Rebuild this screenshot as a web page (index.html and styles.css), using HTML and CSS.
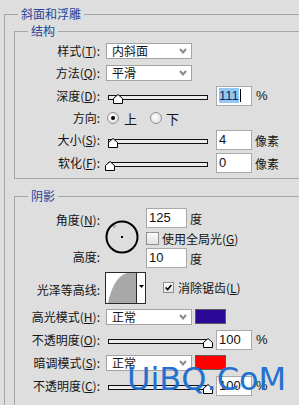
FILE: index.html
```html
<!DOCTYPE html>
<html lang="zh-CN">
<head>
    <meta charset="UTF-8">
    <title>斜面和浮雕</title>
    <link rel="stylesheet" href="styles.css">
</head>
<body>
    <fieldset class="group outer">
        <legend>斜面和浮雕</legend>

        <!-- 结构 -->
        <fieldset class="group sub">
            <legend>结构</legend>
            <div class="row">
                <label class="lbl">样式(<u>T</u>):</label>
                <div class="select"><span>内斜面</span><svg class="chev" width="8" height="6" viewBox="0 0 8 6"><path d="M1 1l3 3.5L7 1" fill="none" stroke="#8c8c8c" stroke-width="2"/></svg></div>
            </div>
            <div class="row">
                <label class="lbl">方法(<u>Q</u>):</label>
                <div class="select"><span>平滑</span><svg class="chev" width="8" height="6" viewBox="0 0 8 6"><path d="M1 1l3 3.5L7 1" fill="none" stroke="#8c8c8c" stroke-width="2"/></svg></div>
            </div>
            <div class="row r-mid">
                <label class="lbl">深度(<u>D</u>):</label>
                <div class="slider"><div class="track"></div><svg class="thumb" style="left:7px" width="10" height="10" viewBox="0 0 10 10"><path d="M.5 9.5V4.5L5 .5l4.5 4v5z" fill="#fff" stroke="#000"/></svg></div>
                <div class="input"><span class="sel">111</span><span class="caret"></span></div>
                <span class="unit num">%</span>
            </div>
            <div class="row">
                <label class="lbl">方向:</label>
                <span class="radio on"></span><span class="opt">上</span>
                <span class="radio second"></span><span class="opt opt-b">下</span>
            </div>
            <div class="row">
                <label class="lbl">大小(<u>S</u>):</label>
                <div class="slider"><div class="track"></div><svg class="thumb" style="left:2px" width="10" height="10" viewBox="0 0 10 10"><path d="M.5 9.5V4.5L5 .5l4.5 4v5z" fill="#fff" stroke="#000"/></svg></div>
                <div class="input">4</div>
                <span class="unit">像素</span>
            </div>
            <div class="row r-tall">
                <label class="lbl">软化(<u>F</u>):</label>
                <div class="slider"><div class="track"></div><svg class="thumb" style="left:-1px" width="10" height="10" viewBox="0 0 10 10"><path d="M.5 9.5V4.5L5 .5l4.5 4v5z" fill="#fff" stroke="#000"/></svg></div>
                <div class="input">0</div>
                <span class="unit">像素</span>
            </div>
        </fieldset>

        <!-- 阴影 -->
        <fieldset class="group sub shade">
            <legend>阴影</legend>
            <div class="angle">
                <div class="angle-labels">
                    <label class="lbl">角度(<u>N</u>):</label>
                    <label class="lbl">高度:</label>
                </div>
                <svg class="dial" width="34" height="34" viewBox="0 0 34 34">
                    <circle cx="17" cy="17" r="15.5" fill="none" stroke="#000" stroke-width="2"/>
                    <rect x="16" y="16" width="2" height="2" fill="#000"/>
                    <path d="M8 6h1M10 6h1M9 5v1M9 7v1" stroke="#666" stroke-width="1"/>
                </svg>
                <div class="angle-fields">
                    <div class="field"><div class="input wide">125</div><span class="unit">度</span></div>
                    <div class="field check-row"><span class="check"></span><span>使用全局光(<u>G</u>)</span></div>
                    <div class="field"><div class="input wide">10</div><span class="unit">度</span></div>
                </div>
            </div>
            <div class="row contour-row">
                <label class="lbl">光泽等高线:</label>
                <svg class="contour" width="41" height="32" viewBox="0 0 41 32">
                    <rect x="0.5" y="0.5" width="40" height="31" fill="#fff" stroke="#2a2a2a"/>
                    <path d="M3 31C6 16 12 4 22 1H31.5V31z" fill="#a8a8a8"/>
                    <path d="M31.5 1V31" stroke="#2a2a2a"/>
                    <path d="M34 13h5l-2.5 3z" fill="#000"/>
                </svg>
                <span class="check on"><svg width="11" height="11" viewBox="0 0 11 11"><path d="M2 5.5l2.5 2.5L9 2.5" fill="none" stroke="#000" stroke-width="2"/></svg></span>
                <span class="check-text">消除锯齿(<u>L</u>)</span>
            </div>
            <div class="row r-shade">
                <label class="lbl">高光模式(<u>H</u>):</label>
                <div class="select"><span>正常</span><svg class="chev" width="8" height="6" viewBox="0 0 8 6"><path d="M1 1l3 3.5L7 1" fill="none" stroke="#8c8c8c" stroke-width="2"/></svg></div>
                <span class="swatch highlight"></span>
            </div>
            <div class="row r-shade">
                <label class="lbl">不透明度(<u>O</u>):</label>
                <div class="slider"><div class="track"></div><svg class="thumb" style="left:97px" width="10" height="10" viewBox="0 0 10 10"><path d="M.5 9.5V4.5L5 .5l4.5 4v5z" fill="#fff" stroke="#000"/></svg></div>
                <div class="input">100</div>
                <span class="unit num">%</span>
            </div>
            <div class="row r-shade">
                <label class="lbl">暗调模式(<u>S</u>):</label>
                <div class="select"><span>正常</span><svg class="chev" width="8" height="6" viewBox="0 0 8 6"><path d="M1 1l3 3.5L7 1" fill="none" stroke="#8c8c8c" stroke-width="2"/></svg></div>
                <span class="swatch shadow"></span>
            </div>
            <div class="row r-shade">
                <label class="lbl">不透明度(<u>C</u>):</label>
                <div class="slider"><div class="track"></div><svg class="thumb" style="left:97px" width="10" height="10" viewBox="0 0 10 10"><path d="M.5 9.5V4.5L5 .5l4.5 4v5z" fill="#fff" stroke="#000"/></svg></div>
                <div class="input">100</div>
                <span class="unit num">%</span>
            </div>
        </fieldset>
    </fieldset>

    <div class="watermark">UiBQ.CoM</div>
</body>
</html>
```

FILE: styles.css
```css
html, body {
    margin: 0;
    overflow: hidden;
}
body {
    position: relative;
    width: 299px;
    height: 405px;
    background: #dedede;
    font-family: "Noto Sans CJK SC", "Noto Sans", sans-serif;
    font-size: 12px;
    color: #141414;
}
u {
    text-decoration: underline;
}

/* group frames, open on the right like the cropped dialog */
.group {
    margin: 0;
    padding: 0;
    border: 1px solid #a6a6a6;
    border-right: 0;
    min-inline-size: 0;
}
.group > legend {
    margin-left: 13px;
    padding: 0 3px;
    line-height: 16px;
    font-size: 12px;
    color: #23469b;
}
.outer {
    margin: 6px 0 0 4px;
}
.sub {
    margin: 1px 0 0 9px;
    padding: 1px 0 3px;
}
.shade {
    margin-top: 9px;
    padding-bottom: 10px;
}

/* rows */
.row {
    display: flex;
    align-items: center;
    height: 22px;
}
.r-mid {
    height: 23px;
}
.r-tall {
    height: 24px;
}
.r-shade {
    height: 23px;
}
.lbl {
    flex: none;
    width: 85px;
    text-align: right;
    line-height: 16px;
}

/* controls */
.select {
    flex: none;
    display: flex;
    align-items: center;
    justify-content: space-between;
    box-sizing: border-box;
    width: 86px;
    height: 16px;
    margin-left: 6px;
    padding: 0 4px 0 5px;
    border: 1px solid #a3a3a3;
    background: #fff;
    line-height: 14px;
}
.slider {
    position: relative;
    flex: none;
    width: 104px;
    height: 14px;
    margin-left: 6px;
}
.track {
    box-sizing: border-box;
    width: 100px;
    height: 5px;
    margin: 6px 0 0 2px;
    border: 1px solid #111;
    background: #ececec;
}
.thumb {
    position: absolute;
    top: 5px;
}
.input {
    flex: none;
    box-sizing: border-box;
    width: 36px;
    height: 20px;
    margin-left: 6px;
    padding-left: 2px;
    border: 1px solid #a9a9a9;
    background: #fff;
    font-family: "Liberation Sans", Arial, sans-serif;
    font-size: 13px;
    line-height: 18px;
    color: #111;
}
.input.wide {
    width: 41px;
    margin-left: 0;
}
.sel {
    background: #93c8f6;
    color: #0b2a66;
}
.caret {
    display: inline-block;
    width: 1px;
    height: 13px;
    margin-left: 1px;
    vertical-align: -2px;
    background: #000;
}
.unit {
    margin-left: 3px;
}
.unit.num {
    margin-left: 4px;
    font-family: "Liberation Sans", Arial, sans-serif;
    font-size: 13px;
}

.radio {
    position: relative;
    flex: none;
    box-sizing: border-box;
    width: 12px;
    height: 12px;
    margin-left: 7px;
    border: 1px solid #909090;
    border-radius: 50%;
    background: radial-gradient(circle at 40% 40%, #fff, #d8d8d8);
}
.radio.on::after {
    content: "";
    position: absolute;
    left: 3px;
    top: 3px;
    width: 4px;
    height: 4px;
    border-radius: 50%;
    background: #000;
}
.radio.second {
    margin-left: 13px;
}
.opt {
    margin-left: 5px;
    font-size: 13px;
}
.opt-b {
    margin-left: 4px;
}

.check {
    flex: none;
    display: flex;
    align-items: center;
    justify-content: center;
    box-sizing: border-box;
    width: 13px;
    height: 13px;
    border: 1px solid #8f8f8f;
    background: linear-gradient(#fbfbfb, #e2e2e2);
}

/* shading */
.angle {
    display: flex;
    height: 63px;
}
.angle-labels {
    display: flex;
    flex-direction: column;
    gap: 17px;
    padding-top: 5px;
}
.angle-labels .lbl {
    line-height: 20px;
}
.dial {
    flex: none;
    margin: 15px 0 0 5px;
}
.angle-fields {
    display: flex;
    flex-direction: column;
    margin-left: 7px;
    padding-top: 3px;
}
.field {
    display: flex;
    align-items: center;
    height: 20px;
}
.check-row {
    height: 15px;
    margin: 3px 0 2px;
    gap: 3px;
}
.contour-row {
    height: 35px;
    margin-top: 2px;
}
.contour-row .lbl {
    padding-top: 4px;
}
.contour {
    flex: none;
    margin-left: 5px;
}
.contour-row .check {
    width: 11px;
    height: 11px;
    margin-left: 17px;
}
.check-text {
    margin-left: 4px;
}
.swatch {
    flex: none;
    box-sizing: border-box;
    width: 31px;
    height: 15px;
    margin-left: 3px;
    border: 1px solid #5a5a5a;
}
.highlight {
    background: #2b0896;
}
.shadow {
    background: #fd0000;
}

.watermark {
    position: absolute;
    left: 127px;
    top: 361px;
    font-family: "DejaVu Sans", "Liberation Sans", sans-serif;
    font-size: 32px;
    line-height: 36px;
    color: #2470cf;
}
```
